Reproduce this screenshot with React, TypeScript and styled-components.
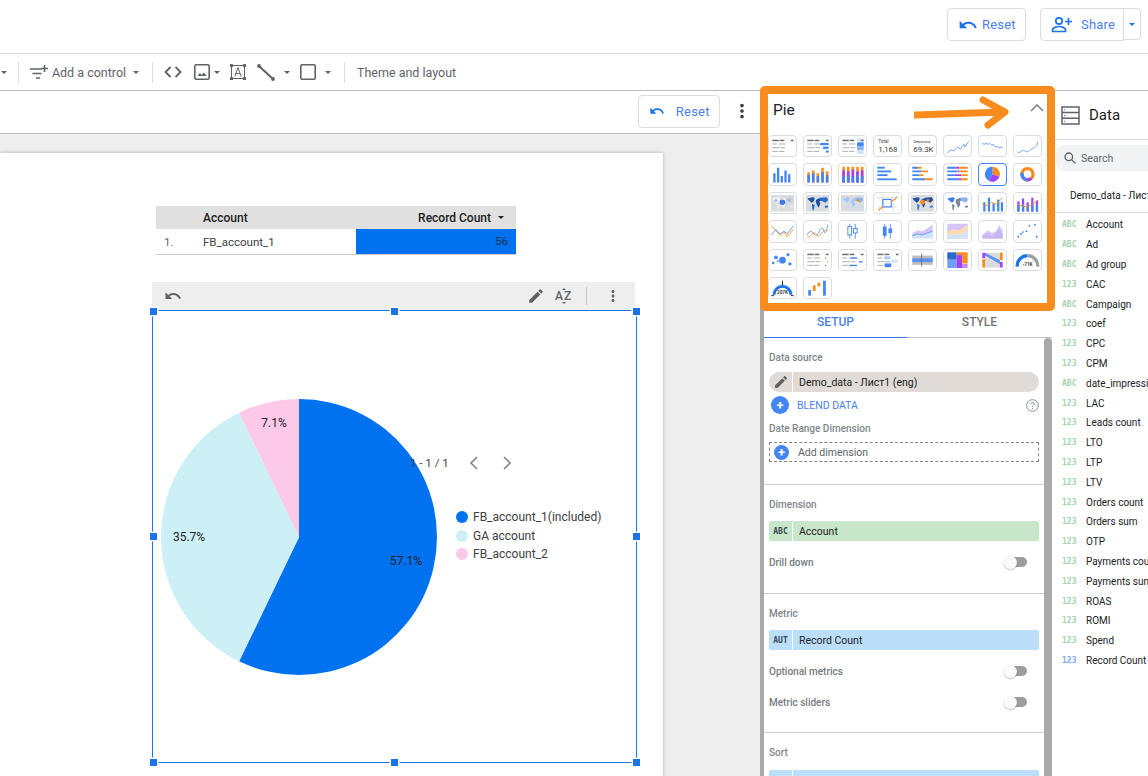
import React from 'react';
import styled, { createGlobalStyle } from 'styled-components';

const BLUE = '#4285f4';
const ORANGE = '#fa8c1e';
const PURPLE = '#a142f4';
const DARK = '#6b6f73';
const GRAY = '#b4b7ba';

const GlobalStyle = createGlobalStyle`
  html, body {
    margin: 0;
    padding: 0;
    background: #fff;
    font-family: Roboto, "Noto Sans", sans-serif;
    color: #202124;
  }
`;

const Shell = styled.div`
  display: flex;
  flex-direction: column;
  width: 1148px;
  height: 776px;
  overflow: hidden;
`;

const TopBar = styled.header`
  display: flex;
  flex: none;
  align-items: center;
  justify-content: flex-end;
  gap: 14px;
  height: 53px;
  padding: 0 7px 4px 0;
  box-sizing: border-box;
  border-bottom: 1px solid #dadce0;
  box-sizing: content-box;
  height: 49px;
`;

const OutlineButton = styled.button<{ $w: number; $h?: number }>`
  display: flex;
  align-items: center;
  gap: 4px;
  width: ${(p) => p.$w}px;
  height: ${(p) => p.$h ?? 33}px;
  padding: 0 0 0 10px;
  box-sizing: border-box;
  background: #fff;
  border: 1px solid #dadce0;
  border-radius: 4px;
  color: #4c7ff0;
  font: 400 13px Roboto, sans-serif;
  letter-spacing: 0.2px;
`;

const ShareGroup = styled.div`
  display: flex;
  align-items: flex-start;
`;

const ShareMain = styled(OutlineButton)`
  gap: 8px;
  border-radius: 4px 0 0 4px;
`;

const ShareCaret = styled.div`
  display: flex;
  align-items: center;
  justify-content: center;
  width: 17px;
  height: 32px;
  box-sizing: border-box;
  border: 1px solid #dadce0;
  border-left: none;
  border-radius: 0 4px 4px 0;
`;

const Caret = styled.span<{ $color?: string }>`
  display: block;
  flex: none;
  width: 0;
  height: 0;
  border-left: 3.5px solid transparent;
  border-right: 3.5px solid transparent;
  border-top: 3.5px solid ${(p) => p.$color ?? '#5f6368'};
`;

const Toolbar = styled.div`
  display: flex;
  flex: none;
  align-items: center;
  height: 36px;
  border-bottom: 1px solid #bdbdbd;
  color: #5f6368;
  font-size: 12.5px;
  white-space: nowrap;
`;

const Slot = styled.div<{ $w: number; $ml?: number }>`
  display: flex;
  flex: none;
  align-items: center;
  justify-content: center;
  width: ${(p) => p.$w}px;
  margin-left: ${(p) => p.$ml ?? 0}px;
`;

const ToolSep = styled.span`
  display: block;
  width: 1px;
  height: 21px;
  background: #dadce0;
`;

const Main = styled.div`
  display: flex;
  flex: 1;
  min-height: 0;
`;

const LeftColumn = styled.div`
  display: flex;
  flex: none;
  flex-direction: column;
  width: 760px;
`;

const SubBar = styled.div`
  display: flex;
  flex: none;
  align-items: center;
  justify-content: flex-end;
  gap: 4px;
  height: 42px;
  padding-bottom: 2px;
  box-sizing: border-box;
  border-bottom: 1px solid #bdbdbd;
  height: 43px;
`;

const Dots = styled.div`
  display: flex;
  align-items: center;
  justify-content: center;
  width: 36px;
`;

const Canvas = styled.div`
  flex: 1;
  padding-top: 19px;
  background: #eee;
  overflow: hidden;
`;

const ReportPage = styled.div`
  position: relative;
  width: 663px;
  height: 700px;
  background: #fff;
  box-shadow: 0 0 4px rgba(0, 0, 0, 0.25);
`;

const TableChart = styled.div`
  position: absolute;
  left: 156px;
  top: 53px;
  width: 360px;
  font-size: 11.5px;
`;

const TableHead = styled.div`
  display: flex;
  align-items: center;
  height: 23px;
  padding: 0 12px 0 47px;
  background: #e0e0e0;
  font-size: 12px;
  font-weight: 500;
  color: #202124;
`;

const HeadRight = styled.span`
  display: flex;
  align-items: center;
  gap: 7px;
  margin-left: auto;
`;

const TableRow = styled.div`
  display: flex;
  align-items: center;
  height: 25px;
  border-bottom: 1px solid #ccc;
  color: #3c4043;
`;

const RowIndex = styled.span`
  width: 47px;
  padding-left: 8px;
  box-sizing: border-box;
  color: #5f6368;
`;

const RowName = styled.span`
  width: 153px;
`;

const RowBar = styled.span`
  flex: 1;
  align-self: stretch;
  padding-right: 8px;
  line-height: 25px;
  text-align: right;
  background: #0072f0;
  color: #1c3553;
`;

const ChartTools = styled.div`
  position: absolute;
  left: 152px;
  top: 129px;
  display: flex;
  align-items: center;
  width: 483px;
  height: 28px;
  padding: 0 13px 0 12px;
  box-sizing: border-box;
  background: #eee;
`;

const ToolsRight = styled.div`
  display: flex;
  align-items: center;
  gap: 10px;
  margin-left: auto;
`;

const ToolsSep = styled.span`
  display: block;
  width: 1px;
  height: 18px;
  margin: 0 7px 0 3px;
  background: #c8c8c8;
`;

const PieFrame = styled.div`
  position: absolute;
  left: 152px;
  top: 157px;
  display: flex;
  width: 485px;
  height: 453px;
  box-sizing: border-box;
  border: 1px solid #1a73e8;
`;

const PieSvg = styled.svg`
  flex: none;
  margin: 88px 0 0 8px;
`;

const Legend = styled.div`
  display: flex;
  flex-direction: column;
  gap: 4.5px;
  margin: 199px 0 0 19px;
  font-size: 12px;
  color: #3c4043;
`;

const LegendRow = styled.div`
  display: flex;
  align-items: center;
  gap: 5px;
  height: 14px;
  white-space: nowrap;
`;

const LegendDot = styled.span<{ $color: string }>`
  width: 12px;
  height: 12px;
  border-radius: 50%;
  background: ${(p) => p.$color};
`;

const Pager = styled.div`
  position: absolute;
  left: 257px;
  top: 143px;
  display: flex;
  align-items: center;
  height: 18px;
  font-size: 11.5px;
  color: #3c4043;
  white-space: nowrap;
`;

const PagerArrows = styled.div`
  display: flex;
  gap: 18px;
  margin-left: 19px;
`;

const Handle = styled.span<{ $x: string; $y: string }>`
  position: absolute;
  left: ${(p) => p.$x};
  top: ${(p) => p.$y};
  width: 7px;
  height: 7px;
  margin: -3.5px 0 0 -3.5px;
  background: #1a73e8;
  box-shadow: 0 0 0 1.5px #fff;
`;

const PropsPanel = styled.aside`
  position: relative;
  z-index: 2;
  display: flex;
  flex: none;
  flex-direction: column;
  width: 292px;
  box-sizing: border-box;
  border-left: 4px solid #a9a9a9;
`;

const PickerArea = styled.div`
  flex: none;
  height: 221px;
`;

const PickerTitle = styled.div`
  display: flex;
  align-items: center;
  justify-content: space-between;
  height: 44px;
  padding: 0 8px 7px 9px;
  box-sizing: border-box;
  font-size: 15.5px;
`;

const PickerGrid = styled.div`
  display: grid;
  grid-template-columns: repeat(8, 29px);
  grid-auto-rows: 22.4px;
  column-gap: 6px;
  row-gap: 6px;
  padding-left: 4px;
`;

const Tile = styled.div<{ $selected?: boolean }>`
  box-sizing: border-box;
  background: #fff;
  border: 1px solid ${(p) => (p.$selected ? BLUE : '#dadce0')};
  border-radius: 4px;
  overflow: hidden;

  svg {
    display: block;
    width: 100%;
    height: 100%;
  }
`;

const Highlight = styled.div`
  position: absolute;
  left: -4px;
  top: -5px;
  width: 295px;
  height: 225px;
  box-sizing: border-box;
  border: 8px solid ${ORANGE};
  border-radius: 5px;
  pointer-events: none;
`;

const ArrowMark = styled.svg`
  position: absolute;
  left: 150px;
  top: 0;
  pointer-events: none;
`;

const Tabs = styled.div`
  display: flex;
  flex: none;
  height: 26px;
  width: 288px;
`;

const Tab = styled.div<{ $active?: boolean; $w: number }>`
  width: ${(p) => p.$w}px;
  height: 26px;
  box-sizing: border-box;
  padding-bottom: 6px;
  display: flex;
  align-items: center;
  justify-content: center;
  border-bottom: ${(p) => (p.$active ? `1px solid #3b78e7` : '1px solid #c4c4c4')};
  color: ${(p) => (p.$active ? '#4c7ff0' : '#757575')};
  font-size: 12px;
  font-weight: 500;
`;

const PanelBody = styled.div`
  display: flex;
  flex: 1;
  min-height: 0;
`;

const PanelContent = styled.div`
  flex: 1;
  min-width: 0;
`;

const ScrollThumb = styled.div`
  flex: none;
  width: 8px;
  background: #a9a9a9;
  border-radius: 4px 4px 0 0;
`;

const Section = styled.section<{ $h: number }>`
  display: flex;
  flex-direction: column;
  height: ${(p) => p.$h}px;
  padding: 0 5px;
  box-sizing: border-box;
  border-bottom: 1px solid #d0d0d0;
`;

const Label = styled.div<{ $mt: number }>`
  margin-top: ${(p) => p.$mt}px;
  font-size: 10px;
  font-weight: 500;
  line-height: 12px;
  color: #80868b;
  white-space: nowrap;
`;

const Chip = styled.div<{ $bg: string; $round?: boolean; $mt: number }>`
  display: flex;
  flex: none;
  align-items: center;
  height: 20px;
  margin-top: ${(p) => p.$mt}px;
  background: ${(p) => p.$bg};
  border-radius: ${(p) => (p.$round ? '10px' : '2px')};
  font-size: 10.5px;
  color: #202124;
  white-space: nowrap;
`;

const ChipLead = styled.span`
  display: flex;
  flex: none;
  align-items: center;
  justify-content: center;
  align-self: stretch;
  width: 23px;
  margin-right: 6px;
  border-right: 1px solid #fff;
  font: 700 8px 'DejaVu Sans Mono', 'Liberation Mono', monospace;
  color: #37474f;
`;

const BlendRow = styled.div`
  display: flex;
  align-items: center;
  height: 18px;
  margin-top: 4px;
  padding-left: 2px;
  color: #4c7ff0;
  font-size: 10.5px;
`;

const PlusCircle = styled.span<{ $size: number }>`
  display: flex;
  flex: none;
  align-items: center;
  justify-content: center;
  width: ${(p) => p.$size}px;
  height: ${(p) => p.$size}px;
  border-radius: 50%;
  background: ${BLUE};
  color: #fff;
  font: 700 13px/1 Roboto, sans-serif;
`;

const BlendText = styled.span`
  margin-left: 8px;
`;

const Help = styled.span`
  display: flex;
  margin-left: auto;
  margin-right: 0;
`;

const DashedBox = styled.div`
  display: flex;
  align-items: center;
  flex: none;
  height: 20px;
  margin-top: 7px;
  padding-left: 4px;
  box-sizing: border-box;
  border: 1px dashed #80868b;
  font-size: 10.5px;
  color: #5f6368;
`;

const DashedText = styled.span`
  margin-left: 9px;
`;

const SwitchRow = styled.div<{ $mt: number }>`
  display: flex;
  align-items: center;
  justify-content: space-between;
  flex: none;
  height: 16px;
  margin-top: ${(p) => p.$mt}px;
  padding-right: 12px;
  font-size: 10px;
  font-weight: 500;
  color: #757a80;
`;

const SwitchTrack = styled.span`
  position: relative;
  display: block;
  width: 22px;
  height: 10px;
  border-radius: 5px;
  background: #9e9e9e;

  &::before {
    content: '';
    position: absolute;
    left: -1px;
    top: -1.5px;
    width: 13px;
    height: 13px;
    border-radius: 50%;
    background: #fafafa;
    box-shadow: 0 1px 2px rgba(0, 0, 0, 0.25);
  }
`;

const DataPanel = styled.aside`
  flex: 1;
  min-width: 0;
  white-space: nowrap;
`;

const DataHeader = styled.div`
  display: flex;
  align-items: center;
  gap: 9px;
  height: 48px;
  padding-left: 9px;
  box-sizing: border-box;
  border-bottom: 1px solid #dadce0;
  height: 49px;
  font-size: 15px;
`;

const SearchBox = styled.div`
  display: flex;
  align-items: center;
  gap: 5px;
  width: 110px;
  height: 26px;
  margin: 5px 0 0 4px;
  padding-left: 8px;
  box-sizing: border-box;
  background: #f1f3f4;
  border-radius: 8px;
  font-size: 10.5px;
  color: #5f6368;
`;

const SourceRow = styled.div`
  display: flex;
  align-items: center;
  gap: 8px;
  height: 42px;
  padding: 8px 0 0 10px;
  box-sizing: border-box;
  border-bottom: 1px solid #dadce0;
  font-size: 10px;
  overflow: hidden;
`;

const FieldList = styled.div`
  padding-top: 2px;
`;

const FieldRow = styled.div`
  display: flex;
  align-items: center;
  height: 19.8px;
  padding-left: 10px;
  font-size: 10px;
  color: #202124;
`;

const FieldType = styled.span<{ $color: string }>`
  flex: none;
  width: 24px;
  font: 700 8px 'DejaVu Sans Mono', 'Liberation Mono', monospace;
  color: ${(p) => p.$color};
`;

const Icon = ({ size = 24, d, color = '#5f6368' }: { size?: number; d: string; color?: string }) => (
  <svg width={size} height={size} viewBox="0 0 24 24" fill={color}>
    <path d={d} />
  </svg>
);

const UNDO =
  'M12.5 8c-2.65 0-5.05.99-6.9 2.6L2 7v9h9l-3.62-3.62c1.39-1.16 3.16-1.88 5.12-1.88 3.54 0 6.55 2.31 7.6 5.5l2.37-.78C21.08 11.03 17.15 8 12.5 8z';
const PENCIL =
  'M3 17.25V21h3.75L17.81 9.94l-3.75-3.75L3 17.25zM20.71 7.04c.39-.39.39-1.02 0-1.41l-2.34-2.34c-.39-.39-1.02-.39-1.41 0l-1.83 1.83 3.75 3.75 1.83-1.83z';
const MORE =
  'M12 8c1.1 0 2-.9 2-2s-.9-2-2-2-2 .9-2 2 .9 2 2 2zm0 2c-1.1 0-2 .9-2 2s.9 2 2 2 2-.9 2-2-.9-2-2-2zm0 6c-1.1 0-2 .9-2 2s.9 2 2 2 2-.9 2-2-.9-2-2-2z';

const PersonAdd = () => (
  <svg width="22" height="17" viewBox="0 0 22 17" fill="none" stroke="#1a73e8" strokeWidth="1.7">
    <circle cx="8" cy="5" r="3.2" />
    <path d="M1.5 15.5v-1.6c0-2.2 4.2-3.4 6.5-3.4s6.5 1.2 6.5 3.4v1.6z" />
    <path d="M14 5.5h7M17.5 2v7" />
  </svg>
);

const FilterPlus = () => (
  <svg width="18" height="15" viewBox="0 0 18 15" fill="none" stroke="#5f6368" strokeWidth="1.6">
    <path d="M0 4h12M2.5 8.5h9M6 13h4M14.5 0v7M11 3.5h7" />
  </svg>
);

const CodeMark = () => (
  <svg width="18" height="12" viewBox="0 0 18 12" fill="none" stroke="#5f6368" strokeWidth="1.8">
    <path d="M6.5 1L1.5 6l5 5M11.5 1l5 5-5 5" />
  </svg>
);

const ImageMark = () => (
  <svg width="16" height="16" viewBox="0 0 16 16">
    <rect x="0.8" y="0.8" width="14.4" height="14.4" rx="1.5" fill="none" stroke="#5f6368" strokeWidth="1.6" />
    <path d="M3.5 12l2.5-3 1.8 2 2-2.6 3 3.6z" fill="#5f6368" />
  </svg>
);

const TextMark = () => (
  <svg width="16" height="16" viewBox="0 0 16 16" fill="#5f6368">
    <path d="M2 1.5h12M2 14.5h12M1.5 2v12M14.5 2v12" stroke="#5f6368" strokeWidth="1" fill="none" />
    <rect x="0" y="0" width="3" height="3" rx="0.6" />
    <rect x="13" y="0" width="3" height="3" rx="0.6" />
    <rect x="0" y="13" width="3" height="3" rx="0.6" />
    <rect x="13" y="13" width="3" height="3" rx="0.6" />
    <path d="M4.8 12.5L8 3.5l3.2 9M6 9.5h4" stroke="#5f6368" strokeWidth="1" fill="none" />
  </svg>
);

const LineMark = () => (
  <svg width="18" height="17" viewBox="0 0 18 17" fill="#5f6368">
    <path d="M2 2l14 13" stroke="#5f6368" strokeWidth="2" />
    <circle cx="2" cy="2" r="1.9" />
    <circle cx="16" cy="15" r="1.9" />
  </svg>
);

const RectMark = () => (
  <svg width="16" height="16" viewBox="0 0 16 16">
    <rect x="0.8" y="0.8" width="14.4" height="14.4" rx="1.2" fill="none" stroke="#5f6368" strokeWidth="1.6" />
  </svg>
);

const SortMark = () => (
  <svg width="18" height="18" viewBox="0 0 18 18" fill="#5f6368">
    <text x="0" y="13" fontFamily="Roboto, sans-serif" fontSize="12" fontWeight="500">
      A
    </text>
    <text x="9" y="13" fontFamily="Roboto, sans-serif" fontSize="12" fontWeight="500">
      Z
    </text>
    <path d="M7 3l2-2 2 2zM7 15l2 2 2-2z" />
  </svg>
);

const Chevron = ({ dir, color = '#80868b' }: { dir: 'up' | 'left' | 'right'; color?: string }) => {
  const d = { up: 'M1 8l6-6 6 6', left: 'M9 1L3 7l6 6', right: 'M4 1l6 6-6 6' }[dir];
  return (
    <svg width="14" height="14" viewBox="0 0 14 14" fill="none" stroke={color} strokeWidth="1.6">
      <path d={d} />
    </svg>
  );
};

const HelpMark = () => (
  <svg width="13" height="13" viewBox="0 0 13 13" fill="none" stroke="#80868b" strokeWidth="0.9">
    <circle cx="6.5" cy="6.5" r="5.8" />
    <path d="M4.7 5.2c0-2.3 3.6-2.3 3.6-.1 0 1.4-1.8 1.4-1.8 2.9M6.5 9v1" />
  </svg>
);

const DataMark = () => (
  <svg width="19" height="19" viewBox="0 0 19 19" fill="none" stroke="#5f6368" strokeWidth="1.5">
    <rect x="1" y="1" width="17" height="17" />
    <path d="M1 6.6h17M1 12.3h17" />
    <path d="M3 3.8h1M3 9.5h1M3 15.2h1" strokeWidth="1" />
  </svg>
);

const SearchMark = () => (
  <svg width="12" height="12" viewBox="0 0 12 12" fill="none" stroke="#5f6368" strokeWidth="1.3">
    <circle cx="4.8" cy="4.8" r="3.8" />
    <path d="M7.6 7.6l3.8 3.8" />
  </svg>
);

const SheetMark = () => (
  <svg width="11" height="16" viewBox="0 0 11 16">
    <path d="M1 0h6.5L11 3.5V15a1 1 0 0 1-1 1H1a1 1 0 0 1-1-1V1a1 1 0 0 1 1-1z" fill="#0f9d58" />
    <path d="M7.5 0L11 3.5H7.5z" fill="#87ceac" />
    <rect x="3" y="8" width="5" height="4" fill="none" stroke="#fff" strokeWidth="0.8" />
  </svg>
);

const bars = (items: [number, number, number, string][]) =>
  items.map(([x, y, w, c], i) => <rect key={i} x={x} y={y} width={w} height={22 - 2 - y} fill={c} />);

const hbars = (items: [number, number, string][], h = 1.6) =>
  items.map(([x, w, c], i) => null);

const tableBase = (
  <>
    <rect x="3" y="4" width="7" height="1.6" fill={DARK} />
    <rect x="11" y="4" width="5" height="1.6" fill={DARK} />
    <rect x="23" y="4" width="3" height="1.6" fill={DARK} />
    <rect x="3" y="8" width="5" height="1.2" fill={GRAY} />
    <rect x="10" y="8" width="7" height="1.2" fill={GRAY} />
    <rect x="3" y="12" width="8" height="1.2" fill={GRAY} />
    <rect x="12" y="12" width="5" height="1.2" fill={GRAY} />
    <rect x="3" y="16" width="6" height="1.2" fill={GRAY} />
    <rect x="10" y="16" width="6" height="1.2" fill={GRAY} />
  </>
);

const land = (a: string, b: string, c: string) => (
  <>
    <path d="M3 6l6-1.5 2 1-1 3-2 2-1.5-1z" fill={a} />
    <path d="M8 12l3 1-1 5-1.2 1z" fill={b} />
    <path d="M13 7l4-2 1 3-2 1 1 3-2 4-2-4-1-3z" fill={a} />
    <path d="M17 5l7-.5 1.5 3-3 3-2-1-3-1.5z" fill={c} />
    <path d="M22 14l3-.5.5 2-3.5.5z" fill={b} />
  </>
);

const mapBg = <rect x="1.5" y="2" width="25" height="18" fill="#dadce0" />;

const lineTile = (d: string, color = '#5b92f5') => <path d={d} fill="none" stroke={color} strokeWidth="0.9" />;

const TILES: React.ReactNode[] = [
  tableBase,
  <>
    {tableBase}
    <rect x="17" y="7.5" width="9" height="2.4" fill={BLUE} />
    <rect x="20" y="11.5" width="6" height="2.4" fill={BLUE} />
    <rect x="23" y="15.5" width="3" height="2.4" fill={BLUE} />
  </>,
  <>
    {tableBase}
    <rect x="19" y="2.5" width="7" height="17" fill="#d2e3fc" />
    <rect x="19" y="7" width="7" height="4" fill={BLUE} />
    <rect x="19" y="11" width="7" height="4" fill="#8ab4f8" />
    <rect x="23" y="4" width="3" height="1.6" fill={DARK} />
  </>,
  <>
    <text x="4" y="7.5" fontSize="5" fontFamily="Roboto, sans-serif" fill="#3c4043">
      Total
    </text>
    <text x="4" y="17" fontSize="8.5" fontFamily="Roboto, sans-serif" fill="#3c4043">
      1,168
    </text>
  </>,
  <>
    <text x="4" y="7.5" fontSize="4.6" fontFamily="Roboto, sans-serif" fill="#3c4043">
      Sessions
    </text>
    <text x="4" y="17" fontSize="8.5" fontFamily="Roboto, sans-serif" fill="#3c4043">
      69.3K
    </text>
  </>,
  lineTile('M3 18l4-3 3 1 4-4 3 2 4-5 1 3 4-6'),
  lineTile('M3 8l2 1 2-1 2 1 2-1 2 2 2-1 2 3 2-1 2 2 2-1 2 1'),
  lineTile('M3 17c3 3 5-3 8-1s4 1 6-1 3-1 5-3 2-1 3-6'),
  <>
    {bars([
      [4, 10, 2.5, BLUE],
      [8, 4, 2.5, BLUE],
      [12, 13, 2.5, BLUE],
      [16, 7, 2.5, BLUE],
      [20, 11, 2.5, BLUE],
    ])}
  </>,
  <>
    {bars([
      [3, 9, 2.8, ORANGE],
      [8, 7, 2.8, ORANGE],
      [13, 10, 2.8, ORANGE],
      [18, 4, 2.8, ORANGE],
      [23, 8, 2.8, ORANGE],
      [3, 12, 2.8, BLUE],
      [8, 10, 2.8, BLUE],
      [13, 13, 2.8, BLUE],
      [18, 9, 2.8, BLUE],
      [23, 12, 2.8, BLUE],
    ])}
  </>,
  <>
    {bars([
      [3, 3, 2.8, ORANGE],
      [8, 3, 2.8, ORANGE],
      [13, 3, 2.8, ORANGE],
      [18, 3, 2.8, ORANGE],
      [23, 3, 2.8, ORANGE],
      [3, 7, 2.8, PURPLE],
      [8, 8, 2.8, PURPLE],
      [13, 6, 2.8, PURPLE],
      [18, 8, 2.8, PURPLE],
      [23, 7, 2.8, PURPLE],
      [3, 13, 2.8, BLUE],
      [8, 12, 2.8, BLUE],
      [13, 14, 2.8, BLUE],
      [18, 12, 2.8, BLUE],
      [23, 13, 2.8, BLUE],
    ])}
  </>,
  <>
    <rect x="3" y="3" width="8" height="2" fill={BLUE} />
    <rect x="3" y="7" width="15" height="2" fill={BLUE} />
    <rect x="3" y="11" width="11" height="2" fill={BLUE} />
    <rect x="3" y="15.5" width="21" height="2" fill={BLUE} />
  </>,
  <>
    <path d="M3 3h6v2H3zM3 7h10v2H3zM3 11h8v2H3zM3 15.5h14v2H3z" fill={BLUE} />
    <path d="M9 3h4v2H9zM13 7h7v2h-7zM11 11h4v2h-4zM17 15.5h8v2h-8z" fill={ORANGE} />
  </>,
  <>
    <path d="M3 3h9v2H3zM3 7h11v2H3zM3 11h8v2H3zM3 15.5h12v2H3z" fill={BLUE} />
    <path d="M12 3h4v2h-4zM14 7h2v2h-2zM11 11h7v2h-7zM15 15.5h3v2h-3z" fill={PURPLE} />
    <path d="M16 3h9v2h-9zM16 7h9v2h-9zM18 11h7v2h-7zM18 15.5h7v2h-7z" fill={ORANGE} />
  </>,
  <>
    <path d="M14 11V3a8 8 0 0 1 7.6 10.5z" fill={ORANGE} />
    <path d="M14 11l7.6 2.5A8 8 0 0 1 10 18z" fill={PURPLE} />
    <path d="M14 11l-4 7A8 8 0 0 1 14 3z" fill={BLUE} />
  </>,
  <>
    <circle cx="14" cy="11" r="6" fill="none" stroke={ORANGE} strokeWidth="3.6" />
    <path d="M18 15.5A6 6 0 0 1 13 17" fill="none" stroke={PURPLE} strokeWidth="3.6" />
    <path d="M13 17A6 6 0 0 1 8.2 9.5" fill="none" stroke={BLUE} strokeWidth="3.6" />
  </>,
  <>
    {mapBg}
    {land('#fff', '#e8eaed', '#c6cdd6')}
    <circle cx="14" cy="10" r="3" fill="#3b78e7" />
    <circle cx="7" cy="8" r="1.5" fill="#8ab4f8" />
    <circle cx="21" cy="8" r="1.2" fill="#8ab4f8" />
  </>,
  <>
    {mapBg}
    {land('#174ea6', '#1a5fc8', '#2a69c9')}
  </>,
  <>
    {mapBg}
    {land('#a8c7fa', '#c6dafc', '#8ab4f8')}
    <circle cx="20" cy="8" r="1.5" fill={ORANGE} />
  </>,
  <>
    <path d="M2 5h24M4 15h20M9 2v18M20 3v17" stroke="#e3e5e8" strokeWidth="1.6" />
    <rect x="9" y="7" width="9" height="8" fill="none" stroke={BLUE} strokeWidth="1.2" />
    <path d="M18 9l4-2 2-3M9 15l-3 2-2 2" fill="none" stroke={ORANGE} strokeWidth="1.2" />
  </>,
  <>
    {mapBg}
    {land('#1d4f9c', '#3b78e7', '#174ea6')}
    <circle cx="14" cy="10" r="2.6" fill={ORANGE} />
    <circle cx="20" cy="8" r="1.4" fill={ORANGE} />
  </>,
  <>
    {land('#3b78e7', '#80868b', '#8ab4f8')}
    <path d="M13 7l4-2 1 3-2 1 1 3-2 4-2-4-1-3z" fill="#80868b" />
  </>,
  <>
    {bars([
      [4, 10, 2.4, BLUE],
      [9, 5, 2.4, BLUE],
      [14, 11, 2.4, BLUE],
      [19, 7, 2.4, BLUE],
      [23, 10, 2.4, BLUE],
    ])}
    {lineTile('M3 11l5 3 5-4 5 2 7-7', ORANGE)}
  </>,
  <>
    {bars([
      [3, 9, 2.4, PURPLE],
      [8, 6, 2.4, PURPLE],
      [13, 10, 2.4, PURPLE],
      [18, 5, 2.4, PURPLE],
      [23, 8, 2.4, PURPLE],
      [3, 13, 2.4, BLUE],
      [8, 12, 2.4, BLUE],
      [13, 14, 2.4, BLUE],
      [18, 11, 2.4, BLUE],
      [23, 13, 2.4, BLUE],
    ])}
    {lineTile('M3 12l5 2 5 1 5-2 7-5', ORANGE)}
  </>,
  <>
    {lineTile('M2 15l5-6 4 5 5-3 3 3 7-9')}
    {lineTile('M2 5l6 7 4 4 4-4 3 5 7-8', ORANGE)}
  </>,
  <>
    {lineTile('M3 15c3-6 5-4 7-1s4 2 6-3 4-4 5 0 3 1 4-7')}
    {lineTile('M3 17c3 2 5-5 8-4s3 6 6 2 4-5 8-5', ORANGE)}
  </>,
  <>
    <path d="M11 3v16M17 3v16" stroke={BLUE} strokeWidth="0.9" />
    <rect x="9" y="6" width="4" height="9" fill="#fff" stroke={BLUE} />
    <rect x="15" y="8" width="4" height="5" fill="#fff" stroke={BLUE} />
  </>,
  <>
    <path d="M11 3v16M17 3v16" stroke={BLUE} strokeWidth="0.9" />
    <rect x="9" y="6" width="4" height="10" fill={BLUE} />
    <rect x="15" y="8" width="4" height="5" fill={BLUE} />
  </>,
  <>
    <path d="M3 13l6-3 5 1 5-3 6-4v14H3z" fill="#d7c5f8" />
    <path d="M3 16l6-2 5 1 5-2 6-2v8H3z" fill="#d2e3fc" />
    {lineTile('M3 16l6-2 5 1 5-2 6-2')}
  </>,
  <>
    <rect x="3" y="3" width="22" height="16" fill="#d7c5f8" />
    <path d="M3 12l7-3 6 1 9-6v15H3z" fill="#fddcb5" />
    <path d="M3 16l7-2 6 1 9-5v9H3z" fill="#d2e3fc" />
  </>,
  <>
    <path d="M3 15l6-5 4 3 5-2 3-7 4 6v9H3z" fill="#d7c5f8" />
    <path d="M3 17l6-4 5 4 5-5 2-4 4 7v4H3z" fill="#c3b6f5" />
  </>,
  <>
    {[
      [4, 17],
      [7, 14],
      [9, 12],
      [13, 11],
      [16, 5],
      [22, 4],
      [24, 17],
    ].map(([x, y], i) => (
      <circle key={i} cx={x} cy={y} r="1" fill={BLUE} />
    ))}
  </>,
  <>
    <circle cx="4" cy="14" r="1.4" fill={BLUE} />
    <circle cx="7" cy="8" r="2" fill={BLUE} />
    <circle cx="14" cy="11" r="3.6" fill={BLUE} />
    <circle cx="20" cy="5" r="1.7" fill={BLUE} />
    <circle cx="22" cy="15" r="1.7" fill={BLUE} />
    <circle cx="9" cy="12" r="1" fill={BLUE} />
  </>,
  <>
    {tableBase}
    <rect x="22" y="8" width="1.5" height="1.2" fill={DARK} />
    <rect x="24" y="12" width="1.5" height="1.2" fill={ORANGE} />
    <rect x="22" y="16" width="1.5" height="1.2" fill={DARK} />
  </>,
  <>
    {tableBase}
    <rect x="12" y="8" width="7" height="1.4" fill={BLUE} />
    <rect x="21" y="12" width="4" height="1.4" fill={BLUE} />
    <rect x="11" y="16" width="8" height="1.4" fill={BLUE} />
  </>,
  <>
    {tableBase}
    <rect x="11" y="7" width="6" height="3" fill="#a8c7fa" />
    <rect x="18" y="10.5" width="7" height="3.5" fill="#d2e3fc" />
    <rect x="11" y="14.5" width="7" height="4" fill={BLUE} />
  </>,
  <>
    <rect x="3" y="6" width="22" height="10" fill="#bdbdbd" />
    <rect x="3" y="9" width="22" height="4" fill="#5b92f5" />
    <path d="M13 4v14" stroke="#5f6368" strokeWidth="0.8" />
  </>,
  <>
    <rect x="3" y="2.5" width="10" height="8" fill="#2a69c9" />
    <rect x="3" y="10.5" width="10" height="9" fill="#70a1f5" />
    <rect x="13" y="2.5" width="12" height="3" fill={ORANGE} />
    <rect x="13" y="5.5" width="6" height="14" fill={PURPLE} />
    <rect x="19" y="5.5" width="6" height="9" fill={ORANGE} />
    <rect x="19" y="15" width="6" height="4.5" fill="#c58af9" />
  </>,
  <>
    <rect x="6" y="3" width="16" height="16" fill="#dadce0" />
    <path d="M6 6l16 9v-4L6 3z" fill="#5b92f5" />
    <path d="M3 3h3v6H3z" fill={PURPLE} />
    <path d="M3 10h3v9H3z" fill={ORANGE} />
    <path d="M22 3h3v8h-3z" fill={ORANGE} />
    <path d="M22 13h3v6h-3z" fill={PURPLE} />
  </>,
  <>
    <path d="M3 19a11 11 0 0 1 11-12" fill="none" stroke="#1a73e8" strokeWidth="3.6" transform="translate(0 -1)" />
    <path d="M14 6a11 11 0 0 1 11 12" fill="none" stroke="#9aa0a6" strokeWidth="3.6" />
    <text x="14" y="17" textAnchor="middle" fontSize="5" fontFamily="Roboto, sans-serif" fontWeight="700" fill="#3c4043">
      -71K
    </text>
  </>,
  <>
    <path d="M3 18a11 11 0 0 1 22 0" fill="none" stroke="#cfd2d6" strokeWidth="0.8" />
    <path d="M5 18a9 9 0 0 1 18 0" fill="none" stroke="#1a73e8" strokeWidth="3" />
    <path d="M14 3v5" stroke="#202124" strokeWidth="1" />
    <path d="M2 19h3M23 19h3" stroke="#202124" strokeWidth="1" />
    <text x="14" y="17.5" textAnchor="middle" fontSize="5" fontFamily="Roboto, sans-serif" fontWeight="700" fill="#3c4043">
      207K
    </text>
  </>,
  <>
    <rect x="4" y="13" width="3" height="6" fill={BLUE} />
    <rect x="9" y="8" width="3" height="6" fill={ORANGE} />
    <rect x="14" y="5" width="3" height="4" fill={ORANGE} />
    <rect x="20" y="3" width="3" height="16" fill={BLUE} />
  </>,
];

const PIE = [
  { label: 'FB_account_1(included)', value: 8, color: '#0072f0', text: '57.1%', tx: 245, ty: 166 },
  { label: 'GA account', value: 5, color: '#cdf0f6', text: '35.7%', tx: 28, ty: 142 },
  { label: 'FB_account_2', value: 1, color: '#fcc9e9', text: '7.1%', tx: 113, ty: 28 },
];

const R = 138;

const slicePath = (from: number, to: number) => {
  const a = (from / 14) * 2 * Math.PI;
  const b = (to / 14) * 2 * Math.PI;
  const big = to - from > 7 ? 1 : 0;
  return `M${R} ${R}L${R + R * Math.sin(a)} ${R - R * Math.cos(a)}A${R} ${R} 0 ${big} 1 ${R + R * Math.sin(b)} ${R - R * Math.cos(b)}Z`;
};

const FIELDS: [string, string][] = [
  ['ABC', 'Account'],
  ['ABC', 'Ad'],
  ['ABC', 'Ad group'],
  ['123', 'CAC'],
  ['ABC', 'Campaign'],
  ['123', 'coef'],
  ['123', 'CPC'],
  ['123', 'CPM'],
  ['ABC', 'date_impressions'],
  ['123', 'LAC'],
  ['123', 'Leads count'],
  ['123', 'LTO'],
  ['123', 'LTP'],
  ['123', 'LTV'],
  ['123', 'Orders count'],
  ['123', 'Orders sum'],
  ['123', 'OTP'],
  ['123', 'Payments count'],
  ['123', 'Payments sum'],
  ['123', 'ROAS'],
  ['123', 'ROMI'],
  ['123', 'Spend'],
];

const HANDLES = [
  ['0', '0'],
  ['50%', '0'],
  ['100%', '0'],
  ['0', '50%'],
  ['100%', '50%'],
  ['0', '100%'],
  ['50%', '100%'],
  ['100%', '100%'],
];

const App: React.FC = () => {
  let acc = 0;
  return (
    <Shell>
      <GlobalStyle />
      <TopBar>
        <OutlineButton $w={79}>
          <Icon size={20} d={UNDO} color="#1a73e8" />
          Reset
        </OutlineButton>
        <ShareGroup>
          <ShareMain $w={84}>
            <PersonAdd />
            Share
          </ShareMain>
          <ShareCaret>
            <Caret $color="#1a73e8" />
          </ShareCaret>
        </ShareGroup>
      </TopBar>

      <Toolbar>
        <Slot $w={8}>
          <Caret />
        </Slot>
        <Slot $w={20}>
          <ToolSep />
        </Slot>
        <Slot $w={22}>
          <FilterPlus />
        </Slot>
        <Slot $w={78} $ml={0}>
          Add a control
        </Slot>
        <Slot $w={16}>
          <Caret />
        </Slot>
        <Slot $w={16}>
          <ToolSep />
        </Slot>
        <Slot $w={26}>
          <CodeMark />
        </Slot>
        <Slot $w={24} $ml={4}>
          <ImageMark />
        </Slot>
        <Slot $w={6}>
          <Caret />
        </Slot>
        <Slot $w={20} $ml={8}>
          <TextMark />
        </Slot>
        <Slot $w={20} $ml={8}>
          <LineMark />
        </Slot>
        <Slot $w={6} $ml={8}>
          <Caret />
        </Slot>
        <Slot $w={18} $ml={9}>
          <RectMark />
        </Slot>
        <Slot $w={6} $ml={8}>
          <Caret />
        </Slot>
        <Slot $w={26}>
          <ToolSep />
        </Slot>
        Theme and layout
      </Toolbar>

      <Main>
        <LeftColumn>
          <SubBar>
            <OutlineButton $w={82}>
              <Icon size={16} d={UNDO} color="#1a73e8" />
              &nbsp;&nbsp;Reset
            </OutlineButton>
            <Dots>
              <Icon size={22} d={MORE} color="#3c4043" />
            </Dots>
          </SubBar>
          <Canvas>
            <ReportPage>
              <TableChart>
                <TableHead>
                  Account
                  <HeadRight>
                    Record Count
                    <Caret $color="#202124" />
                  </HeadRight>
                </TableHead>
                <TableRow>
                  <RowIndex>1.</RowIndex>
                  <RowName>FB_account_1</RowName>
                  <RowBar>56</RowBar>
                </TableRow>
              </TableChart>

              <ChartTools>
                <Icon size={18} d={UNDO} />
                <ToolsRight>
                  <Icon size={18} d={PENCIL} />
                  <SortMark />
                  <ToolsSep />
                  <Icon size={18} d={MORE} />
                </ToolsRight>
              </ChartTools>

              <PieFrame>
                <PieSvg width={276} height={276} viewBox="0 0 276 276">
                  {PIE.map((s) => {
                    const from = acc;
                    acc += s.value;
                    return <path key={s.label} d={slicePath(from, acc)} fill={s.color} />;
                  })}
                  {PIE.map((s) => (
                    <text
                      key={s.text}
                      x={s.tx}
                      y={s.ty}
                      textAnchor="middle"
                      fontSize="12"
                      fontFamily="Roboto, sans-serif"
                      fill="#202124"
                    >
                      {s.text}
                    </text>
                  ))}
                </PieSvg>
                <Legend>
                  {PIE.map((s) => (
                    <LegendRow key={s.label}>
                      <LegendDot $color={s.color} />
                      {s.label}
                    </LegendRow>
                  ))}
                </Legend>
                <Pager>
                  1 - 1 / 1
                  <PagerArrows>
                    <Chevron dir="left" />
                    <Chevron dir="right" />
                  </PagerArrows>
                </Pager>
                {HANDLES.map(([x, y]) => (
                  <Handle key={x + y} $x={x} $y={y} />
                ))}
              </PieFrame>
            </ReportPage>
          </Canvas>
        </LeftColumn>

        <PropsPanel>
          <PickerArea>
            <PickerTitle>
              Pie
              <Chevron dir="up" />
            </PickerTitle>
            <PickerGrid>
              {TILES.map((tile, i) => (
                <Tile key={i} $selected={i === 14}>
                  <svg viewBox="0 0 28 22">{tile}</svg>
                </Tile>
              ))}
            </PickerGrid>
          </PickerArea>

          <Tabs>
            <Tab $active $w={143}>
              SETUP
            </Tab>
            <Tab $w={145}>STYLE</Tab>
          </Tabs>

          <PanelBody>
            <PanelContent>
              <Section $h={147}>
                <Label $mt={14}>Data source</Label>
                <Chip $bg="#e0dbd7" $round $mt={8}>
                  <ChipLead>
                    <Icon size={16} d={PENCIL} />
                  </ChipLead>
                  Demo_data - Лист1 (eng)
                </Chip>
                <BlendRow>
                  <PlusCircle $size={18}>+</PlusCircle>
                  <BlendText>BLEND DATA</BlendText>
                  <Help>
                    <HelpMark />
                  </Help>
                </BlendRow>
                <Label $mt={9}>Date Range Dimension</Label>
                <DashedBox>
                  <PlusCircle $size={15}>+</PlusCircle>
                  <DashedText>Add dimension</DashedText>
                </DashedBox>
              </Section>
              <Section $h={109}>
                <Label $mt={14}>Dimension</Label>
                <Chip $bg="#c8e6c9" $mt={10}>
                  <ChipLead>ABC</ChipLead>
                  Account
                </Chip>
                <SwitchRow $mt={13}>
                  Drill down
                  <SwitchTrack />
                </SwitchRow>
              </Section>
              <Section $h={139}>
                <Label $mt={14}>Metric</Label>
                <Chip $bg="#bbdefb" $mt={10}>
                  <ChipLead>AUT</ChipLead>
                  Record Count
                </Chip>
                <SwitchRow $mt={13}>
                  Optional metrics
                  <SwitchTrack />
                </SwitchRow>
                <SwitchRow $mt={15}>
                  Metric sliders
                  <SwitchTrack />
                </SwitchRow>
              </Section>
              <Section $h={70}>
                <Label $mt={14}>Sort</Label>
                <Chip $bg="#bbdefb" $mt={11}>
                  <ChipLead>AUT</ChipLead>
                  Record Count
                </Chip>
              </Section>
            </PanelContent>
            <ScrollThumb />
          </PanelBody>

          <Highlight />
          <ArrowMark width="100" height="44" viewBox="0 0 100 44">
            <path
              d="M1 24L90 21M69 9L91 21L74 34"
              fill="none"
              stroke={ORANGE}
              strokeWidth="7"
              strokeLinecap="round"
              strokeLinejoin="round"
            />
          </ArrowMark>
        </PropsPanel>

        <DataPanel>
          <DataHeader>
            <DataMark />
            Data
          </DataHeader>
          <SearchBox>
            <SearchMark />
            Search
          </SearchBox>
          <SourceRow>
            <SheetMark />
            Demo_data - Лист1 (eng)
          </SourceRow>
          <FieldList>
            {FIELDS.map(([type, name]) => (
              <FieldRow key={name}>
                <FieldType $color="#a3d3ad">{type}</FieldType>
                {name}
              </FieldRow>
            ))}
            <FieldRow>
              <FieldType $color="#7baaf7">123</FieldType>
              Record Count
            </FieldRow>
          </FieldList>
        </DataPanel>
      </Main>
    </Shell>
  );
};

export default App;
